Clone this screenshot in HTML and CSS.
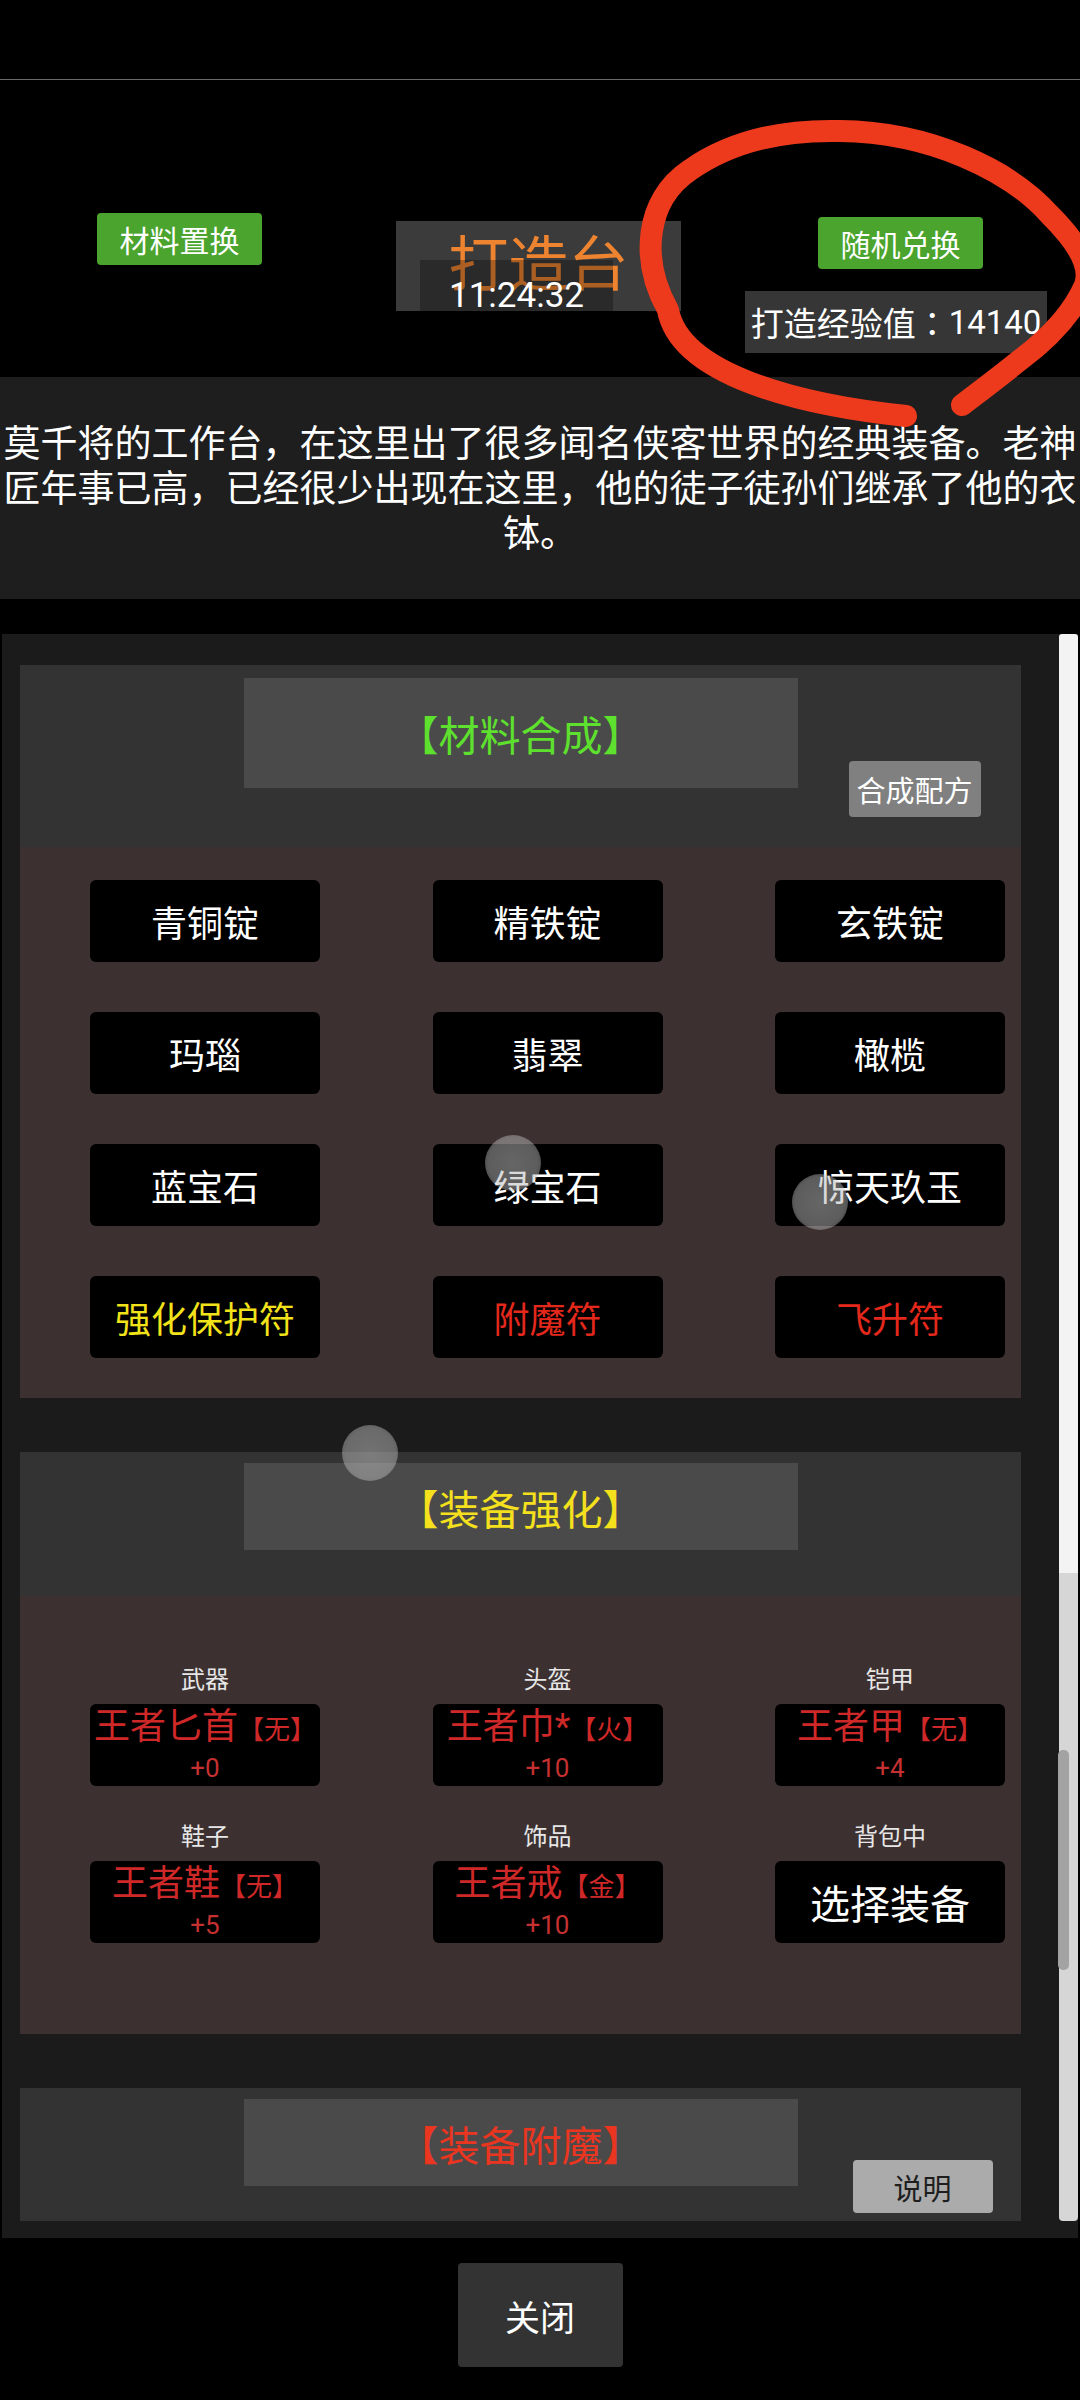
FILE: index.html
```html
<!DOCTYPE html>
<html lang="zh">
<head>
    <meta charset="UTF-8">
    <meta name="viewport" content="width=device-width, initial-scale=1.0">
    <title>打造台</title>
    <link rel="stylesheet" href="styles.css">
</head>
<body>
<div class="page">
    <div class="statusbar"></div>

    <header class="top">
        <button class="btn-green swap">材料置换</button>
        <div class="title-box">
            <span class="title-text">打造台</span>
            <div class="clock">11:24:32</div>
        </div>
        <div class="top-right">
            <button class="btn-green">随机兑换</button>
            <div class="exp">打造经验值<span class="punct">：</span>14140</div>
        </div>
    </header>

    <p class="desc">莫千将的工作台，在这里出了很多闻名侠客世界的经典装备。老神匠年事已高，已经很少出现在这里，他的徒子徒孙们继承了他的衣钵。</p>

    <div class="panel">
        <div class="panel-body">
            <section class="block">
                <div class="block-head head-1">
                    <div class="block-title title-tall green">【材料合成】</div>
                    <button class="btn-small recipe">合成配方</button>
                </div>
                <div class="block-body mats">
                    <button class="mat">青铜锭</button>
                    <button class="mat">精铁锭</button>
                    <button class="mat">玄铁锭</button>
                    <button class="mat">玛瑙</button>
                    <button class="mat">翡翠</button>
                    <button class="mat">橄榄</button>
                    <button class="mat">蓝宝石</button>
                    <button class="mat">绿宝石</button>
                    <button class="mat">惊天玖玉</button>
                    <button class="mat yellow">强化保护符</button>
                    <button class="mat red">附魔符</button>
                    <button class="mat red">飞升符</button>
                </div>
            </section>

            <section class="block">
                <div class="block-head head-2">
                    <div class="block-title yellow">【装备强化】</div>
                </div>
                <div class="block-body gear">
                    <div class="slot">
                        <div class="slot-label">武器</div>
                        <div class="slot-box">
                            <div class="slot-name">王者匕首<small>【无】</small></div>
                            <div class="slot-lv">+0</div>
                        </div>
                    </div>
                    <div class="slot">
                        <div class="slot-label">头盔</div>
                        <div class="slot-box">
                            <div class="slot-name">王者巾*<small>【火】</small></div>
                            <div class="slot-lv">+10</div>
                        </div>
                    </div>
                    <div class="slot">
                        <div class="slot-label">铠甲</div>
                        <div class="slot-box">
                            <div class="slot-name">王者甲<small>【无】</small></div>
                            <div class="slot-lv">+4</div>
                        </div>
                    </div>
                    <div class="slot">
                        <div class="slot-label">鞋子</div>
                        <div class="slot-box">
                            <div class="slot-name">王者鞋<small>【无】</small></div>
                            <div class="slot-lv">+5</div>
                        </div>
                    </div>
                    <div class="slot">
                        <div class="slot-label">饰品</div>
                        <div class="slot-box">
                            <div class="slot-name">王者戒<small>【金】</small></div>
                            <div class="slot-lv">+10</div>
                        </div>
                    </div>
                    <div class="slot">
                        <div class="slot-label">背包中</div>
                        <div class="slot-box pick">选择装备</div>
                    </div>
                </div>
            </section>

            <section class="block">
                <div class="block-head head-3">
                    <div class="block-title red">【装备附魔】</div>
                    <button class="btn-small help">说明</button>
                </div>
            </section>
        </div>
        <div class="scrollbar">
            <div class="sb-top"></div>
            <div class="sb-rest"><div class="sb-thumb"></div></div>
        </div>
    </div>

    <div class="footer">
        <button class="close">关闭</button>
    </div>

    <!-- touch marks on the photo -->
    <span class="blob blob-1"></span>
    <span class="blob blob-2"></span>
    <span class="blob blob-3"></span>

    <!-- red hand-drawn circle -->
    <svg class="annotation" width="1080" height="450" viewBox="0 0 1080 450">
        <path d="M906 416 C800 405 680 375 668 310 C640 260 645 200 690 170 C740 135 800 130 840 131 C930 132 1010 170 1050 215 C1075 240 1092 265 1085 285 C1070 320 1040 345 1020 360 C995 380 975 395 962 405"
              fill="none" stroke="#ee3a1c" stroke-width="22" stroke-linecap="round" stroke-linejoin="round"/>
    </svg>
</div>
</body>
</html>
```

FILE: styles.css
```css
body {
    margin: 0;
    background: #000;
    color: #fff;
    font-family: Roboto, "Noto Sans CJK SC", sans-serif;
}
button {
    font-family: inherit;
    border: none;
    padding: 0;
    cursor: pointer;
}
.page {
    position: relative;
    width: 1080px;
    height: 2400px;
    overflow: hidden;
}
.statusbar {
    height: 80px;
    border-bottom: 1px solid #6a6a6a;
    box-sizing: border-box;
}
/* centred full-width colon, as on the device */
.punct {
    font-family: Roboto, "Noto Sans CJK TC", sans-serif;
}

/* header */
.top {
    display: flex;
    align-items: flex-start;
    height: 297px;
}
.btn-green {
    width: 165px;
    height: 52px;
    background: #4aa42e;
    color: #fff;
    border-radius: 4px;
    font-size: 30px;
}
.swap {
    margin: 133px 0 0 97px;
}
.title-box {
    position: relative;
    margin: 141px 0 0 134px;
    width: 285px;
    height: 90px;
    background: #3b3b3b;
    display: flex;
    align-items: center;
    justify-content: center;
}
.title-text {
    font-size: 60px;
    line-height: 70px;
    color: #ee8430;
}
.clock {
    position: absolute;
    left: 24px;
    top: 39px;
    width: 193px;
    height: 51px;
    box-sizing: border-box;
    padding-top: 18px;
    background: rgba(0, 0, 0, 0.28);
    font-size: 35px;
    line-height: 35px;
    text-align: center;
}
.top-right {
    display: flex;
    flex-direction: column;
    align-items: flex-start;
    margin: 137px 0 0 64px;
}
.top-right .btn-green {
    margin-left: 73px;
}
.exp {
    margin-top: 22px;
    width: 302px;
    height: 62px;
    background: #363636;
    font-size: 33px;
    white-space: nowrap;
    display: flex;
    align-items: center;
    justify-content: center;
}

.desc {
    margin: 0;
    height: 222px;
    box-sizing: border-box;
    padding-top: 45px;
    background: #1e1e1e;
    font-size: 37px;
    line-height: 45px;
    text-align: center;
}

/* scrolling panel */
.panel {
    margin: 35px 2px 0;
    background: #1b1b1b;
    display: flex;
}
.panel-body {
    flex: 1;
    padding: 31px 0 17px 18px;
}
.scrollbar {
    width: 19px;
    margin-bottom: 17px;
    display: flex;
    flex-direction: column;
}
.sb-top {
    height: 939px;
    background: #f3f3f3;
    border-radius: 3px 3px 0 0;
}
.sb-rest {
    flex: 1;
    background: #d6d6d6;
    border-radius: 0 0 4px 4px;
    padding-top: 177px;
}
.sb-thumb {
    width: 11px;
    height: 220px;
    margin-left: -1px;
    background: #a3a3a3;
    border-radius: 5px;
}

.block {
    width: 1001px;
}
.block + .block {
    margin-top: 54px;
}
.block-head {
    display: grid;
    grid-template-columns: 1fr 554px 1fr;
    background: #333;
    box-sizing: border-box;
}
.head-1 {
    height: 182px;
    padding-top: 13px;
}
.head-2 {
    height: 144px;
    padding-top: 11px;
}
.head-3 {
    height: 133px;
    padding-top: 11px;
}
.block-title {
    grid-column: 2;
    align-self: start;
    height: 87px;
    background: #4a4a4a;
    font-size: 41px;
    display: flex;
    align-items: center;
    justify-content: center;
}
.title-tall {
    height: 110px;
}
.green { color: #5ee02e; }
.yellow { color: #f4e01c; }
.red { color: #ea3520; }

.btn-small {
    grid-column: 3;
    justify-self: start;
    align-self: end;
    border-radius: 4px;
    font-size: 29px;
}
.recipe {
    margin: 0 0 30px 51px;
    width: 132px;
    height: 56px;
    background: #808080;
    color: #fff;
}
.help {
    margin: 0 0 8px 55px;
    width: 140px;
    height: 53px;
    background: #ababab;
    color: #1e1e1e;
}

.block-body {
    background: #3c3030;
    display: grid;
    grid-template-columns: repeat(3, 230px);
    column-gap: 112.5px;
    padding-left: 70px;
}
.mats {
    padding-top: 33px;
    padding-bottom: 40px;
    row-gap: 50px;
}
.mat {
    height: 82px;
    background: #000;
    border-radius: 6px;
    color: #fff;
    font-size: 36px;
}
.mat.yellow { color: #f2e21a; }
.mat.red { color: #e4281c; }

.gear {
    padding-top: 69px;
    padding-bottom: 91px;
    row-gap: 36px;
}
.slot-label {
    font-size: 24px;
    line-height: 30px;
    color: #e6e6e6;
    text-align: center;
    margin-bottom: 9px;
}
.slot-box {
    height: 82px;
    background: #000;
    border-radius: 6px;
    text-align: center;
    box-sizing: border-box;
    padding-top: 3px;
}
.slot-name {
    font-size: 36px;
    line-height: 40px;
    color: #cf2828;
    white-space: nowrap;
}
.slot-name small {
    font-size: 26px;
}
.slot-lv {
    margin-top: 3px;
    font-size: 26px;
    line-height: 30px;
    color: #c53030;
}
.slot-box.pick {
    padding: 0;
    font-size: 40px;
    color: #fff;
    display: flex;
    align-items: center;
    justify-content: center;
}

.footer {
    display: flex;
    justify-content: center;
    padding-top: 25px;
}
.close {
    width: 165px;
    height: 104px;
    background: #333;
    color: #fff;
    border-radius: 4px;
    font-size: 35px;
}

/* overlays */
.blob {
    position: absolute;
    width: 56px;
    height: 56px;
    border-radius: 50%;
    background: radial-gradient(circle, rgba(185, 185, 185, 0.55) 0, rgba(185, 185, 185, 0.5) 62%, rgba(230, 230, 230, 0.3) 80%, rgba(255, 255, 255, 0) 100%);
}
.blob-1 { left: 485px; top: 1135px; }
.blob-2 { left: 792px; top: 1174px; }
.blob-3 { left: 342px; top: 1425px; }

.annotation {
    position: absolute;
    left: 0;
    top: 0;
    pointer-events: none;
}
```
